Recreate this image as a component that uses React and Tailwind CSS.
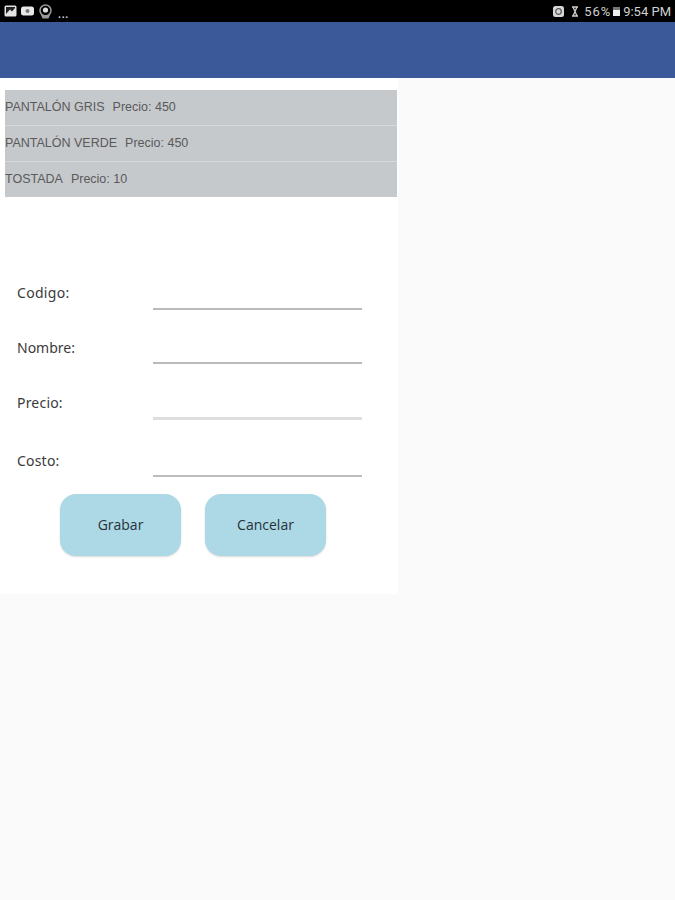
import React from "react";

const PRODUCTS = [
  { name: "PANTALÓN GRIS", price: 450, rowClass: "h-[35px]" },
  { name: "PANTALÓN VERDE", price: 450, rowClass: "h-[36px] border-t border-[#d6d9db]" },
  { name: "TOSTADA", price: 10, rowClass: "h-[36px] border-t border-[#d6d9db]" },
];

const FIELDS = [
  { label: "Codigo:", rowClass: "h-[54px]", labelClass: "pb-[8px] tracking-[0.3px]", lineClass: "h-[2px] bg-[#b9b9b9]" },
  { label: "Nombre:", rowClass: "h-[54px]", labelClass: "pb-[7px]", lineClass: "h-[2px] bg-[#b9b9b9]" },
  { label: "Precio:", rowClass: "h-[56px]", labelClass: "pb-[8px] tracking-[0.2px]", lineClass: "h-[3px] bg-[#dedede]" },
  { label: "Costo:", rowClass: "h-[57px]", labelClass: "pb-[7px] tracking-[0.2px]", lineClass: "h-[2px] bg-[#bdbdbd]" },
];

function StatusBar() {
  return (
    <div className="h-[22px] bg-black flex items-center justify-between pl-[4px] pr-[4px] text-[#d0d0d0]">
      <div className="flex items-center gap-[4px]">
        <svg width="13" height="12" viewBox="0 0 13 12">
          <rect x="0.5" y="0.5" width="12" height="11" rx="1.5" fill="#e4e4e4" />
          <path d="M2 9 L6 4.5 L8 6.5 L11 3 L11 2 L2 2 Z" fill="#222" />
        </svg>
        <svg width="14" height="10" viewBox="0 0 14 10">
          <rect x="0" y="0.5" width="13" height="9" rx="2.5" fill="#e8e8e8" />
          <circle cx="6.5" cy="5" r="2" fill="#777" />
        </svg>
        <svg width="13" height="15" viewBox="0 0 13 15">
          <circle cx="6.5" cy="6.5" r="5.5" fill="none" stroke="#999" strokeWidth="1.5" />
          <circle cx="6.5" cy="6" r="2.6" fill="#ddd" />
          <path d="M2 11 L11 11 L9.5 14.5 L3.5 14.5 Z" fill="#999" />
        </svg>
        <span className="text-[10px] leading-none font-bold mt-[5px] ml-[2px] tracking-[0.8px]">...</span>
      </div>
      <div className="flex items-center text-[13px] leading-none font-['Roboto',sans-serif]">
        <svg width="11" height="11" viewBox="0 0 11 11" className="mr-[7px]">
          <rect x="0" y="0" width="11" height="11" rx="2.5" fill="#d8d8d8" />
          <circle cx="5.5" cy="5.5" r="2.8" fill="none" stroke="#555" strokeWidth="1.2" />
        </svg>
        <svg width="8" height="11" viewBox="0 0 8 11" className="mr-[5px]">
          <path d="M1 1 L7 1 M1 10 L7 10 M2 1 L6 10 M6 1 L2 10" stroke="#cfcfcf" strokeWidth="1.3" fill="none" />
        </svg>
        <span className="tracking-[0.9px]">56%</span>
        <svg width="7" height="9" viewBox="0 0 7 9" className="ml-[2px] mr-[3px]">
          <rect x="0" y="0" width="7" height="9" fill="#777" />
          <rect x="0" y="3" width="7" height="6" fill="#eee" />
        </svg>
        <span>9:54 PM</span>
      </div>
    </div>
  );
}

function App() {
  return (
    <div className="min-h-[900px] bg-[#fafafa] font-['Open_Sans',sans-serif]">
      <StatusBar />
      <div className="h-[56px] bg-[#3b5998]" />

      <div className="w-[398px] h-[516px] bg-white">
        <ul className="pt-[12px] pl-[5px]">
          {PRODUCTS.map((p) => (
            <li
              key={p.name}
              className={
                p.rowClass +
                " w-[392px] bg-[#c6c9cc] flex items-center text-[12.5px] text-[#5a5a5a] font-['Liberation_Sans',sans-serif]"
              }
            >
              <span>{p.name}</span>
              <span className="ml-[8px]">Precio: {p.price}</span>
            </li>
          ))}
        </ul>

        <div className="mt-[59px]">
          {FIELDS.map((f) => (
            <div key={f.label} className={f.rowClass + " flex items-end pl-[17px]"}>
              <label className={"w-[136px] text-[14px] leading-[19px] text-[#3a3a3a] font-['Noto_Sans',sans-serif] " + f.labelClass}>
                {f.label}
              </label>
              <div className={"w-[209px] " + f.lineClass} />
            </div>
          ))}
        </div>

        <div className="mt-[17px] pl-[60px] flex gap-[24px]">
          <button className="w-[121px] h-[62px] pb-[2px] rounded-[16px] bg-[#add8e6] text-[14px] text-[#263238] shadow-[0_1px_2px_rgba(0,0,0,0.15)]">
            Grabar
          </button>
          <button className="w-[121px] h-[62px] pb-[2px] rounded-[16px] bg-[#add8e6] text-[14px] text-[#263238] shadow-[0_1px_2px_rgba(0,0,0,0.15)]">
            Cancelar
          </button>
        </div>
      </div>
    </div>
  );
}

export default App;
